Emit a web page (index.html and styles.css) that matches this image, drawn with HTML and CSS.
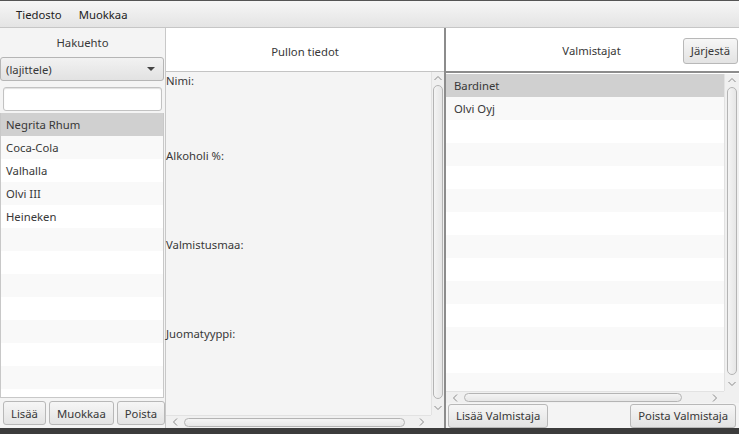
FILE: index.html
```html
<!DOCTYPE html>
<html lang="fi">
<head>
<meta charset="utf-8">
<title>Pullot</title>
<link rel="stylesheet" href="styles.css">
</head>
<body>
<div class="window">
  <div class="menubar">
    <span class="menu">Tiedosto</span>
    <span class="menu">Muokkaa</span>
  </div>
  <div class="main">
    <div class="left">
      <div class="left-title">Hakuehto</div>
      <div class="combo"><span>(lajittele)</span><span class="arrow"></span></div>
      <div class="textfield"></div>
      <div class="list">
        <div class="row sel">Negrita Rhum</div>
        <div class="row">Coca-Cola</div>
        <div class="row">Valhalla</div>
        <div class="row">Olvi III</div>
        <div class="row">Heineken</div>
        <div class="row"></div><div class="row"></div><div class="row"></div>
        <div class="row"></div><div class="row"></div><div class="row"></div>
        <div class="row"></div><div class="row"></div>
      </div>
      <div class="btnrow">
        <button class="btn">Lisää</button>
        <button class="btn">Muokkaa</button>
        <button class="btn">Poista</button>
      </div>
    </div>
    <div class="center">
      <div class="center-head">Pullon tiedot</div>
      <div class="spane">
        <div class="spane-top">
          <div class="details">
            <div class="field first">Nimi:</div>
            <div class="field">Alkoholi %:</div>
            <div class="field">Valmistusmaa:</div>
            <div class="field">Juomatyyppi:</div>
          </div>
          <div class="vbar">
            <svg class="chev" width="10" height="6" viewBox="0 0 10 6"><path d="M1.5 5 L5 1.5 L8.5 5" fill="none" stroke="#8a8a8a" stroke-width="1"/></svg>
            <div class="vthumb"></div>
            <svg class="chev" width="10" height="6" viewBox="0 0 10 6"><path d="M1.5 1 L5 4.5 L8.5 1" fill="none" stroke="#8a8a8a" stroke-width="1"/></svg>
          </div>
        </div>
        <div class="hbar-row">
          <div class="hbar">
            <svg class="chev" width="6" height="10" viewBox="0 0 6 10"><path d="M5 1.5 L1.5 5 L5 8.5" fill="none" stroke="#8a8a8a" stroke-width="1"/></svg>
            <div class="hthumb"></div>
            <svg class="chev" width="6" height="10" viewBox="0 0 6 10"><path d="M1 1.5 L4.5 5 L1 8.5" fill="none" stroke="#8a8a8a" stroke-width="1"/></svg>
          </div>
          <div class="corner"></div>
        </div>
      </div>
    </div>
    <div class="divider"></div>
    <div class="right">
      <div class="right-head">
        <span class="rtitle">Valmistajat</span>
        <button class="btn sort">Järjestä</button>
      </div>
      <div class="rlist">
        <div class="rlist-top">
          <div class="rrows">
            <div class="row sel">Bardinet</div>
            <div class="row">Olvi Oyj</div>
            <div class="row"></div><div class="row"></div><div class="row"></div>
            <div class="row"></div><div class="row"></div><div class="row"></div>
            <div class="row"></div><div class="row"></div><div class="row"></div>
            <div class="row"></div><div class="row"></div><div class="row"></div>
          </div>
          <div class="vbar rv">
            <svg class="chev" width="10" height="6" viewBox="0 0 10 6"><path d="M1.5 5 L5 1.5 L8.5 5" fill="none" stroke="#8a8a8a" stroke-width="1"/></svg>
            <div class="vthumb"></div>
            <svg class="chev" width="10" height="6" viewBox="0 0 10 6"><path d="M1.5 1 L5 4.5 L8.5 1" fill="none" stroke="#8a8a8a" stroke-width="1"/></svg>
          </div>
        </div>
        <div class="hbar-row">
          <div class="hbar">
            <svg class="chev" width="6" height="10" viewBox="0 0 6 10"><path d="M5 1.5 L1.5 5 L5 8.5" fill="none" stroke="#8a8a8a" stroke-width="1"/></svg>
            <div class="hthumb"></div>
            <svg class="chev" width="6" height="10" viewBox="0 0 6 10"><path d="M1 1.5 L4.5 5 L1 8.5" fill="none" stroke="#8a8a8a" stroke-width="1"/></svg>
          </div>
          <div class="corner"></div>
        </div>
      </div>
      <div class="rbtns">
        <button class="btn">Lisää Valmistaja</button>
        <button class="btn">Poista Valmistaja</button>
      </div>
    </div>
  </div>
  <div class="bottom"></div>
</div>
</body>
</html>
```
FILE: styles.css
```css
* { box-sizing: border-box; }
html, body { margin: 0; padding: 0; }
body {
  width: 739px;
  height: 434px;
  overflow: hidden;
  background: #3a3a3a;
  font-family: "Noto Sans", "Open Sans", sans-serif;
  font-size: 11.3px;
  color: #383838;
}
.window {
  width: 739px;
  height: 434px;
  display: flex;
  flex-direction: column;
}
.menubar {
  height: 28px;
  flex: none;
  border-top: 1px solid #555;
  background: linear-gradient(#f6f6f6, #e4e4e4);
  border-bottom: 1px solid #c6c6c6;
  display: flex;
  align-items: center;
  padding-left: 8px;
}
.menu { padding: 0 8px 0 8px; color: #222; }
.menu + .menu { padding-left: 9px; }
.main {
  height: 400px;
  flex: none;
  display: flex;
  background: #f4f4f4;
}
.bottom { flex: 1; background: #3c3c3c; }

/* left */
.left {
  width: 166px;
  flex: none;
  display: flex;
  flex-direction: column;
  border-right: 1px solid #c8c8c8;
  background: #f4f4f4;
}
.left-title {
  height: 29px;
  display: flex;
  align-items: center;
  justify-content: center;
  flex: none;
}
.combo {
  height: 24px;
  flex: none;
  width: 164px;
  border: 1px solid #b5b5b5;
  border-radius: 3px;
  background: linear-gradient(#f2f2f2, #e2e2e2);
  display: flex;
  align-items: center;
  justify-content: space-between;
  padding: 0 8px 0 5px;
}
.arrow {
  width: 0; height: 0;
  border-left: 4px solid transparent;
  border-right: 4px solid transparent;
  border-top: 4px solid #444;
}
.textfield {
  margin: 6px 3px 2px 3px;
  height: 24px;
  flex: none;
  background: #fff;
  border: 1px solid #c2c2c2;
  border-radius: 3px;
  box-shadow: inset 0 1px 1px #e0e0e0;
}
.list {
  flex: 1;
  width: 164px;
  overflow: hidden;
  background: #fff;
  border: 1px solid #c8c8c8;
  border-top: none;
}
.row {
  height: 23px;
  line-height: 23px;
  padding-left: 5px;
  white-space: nowrap;
}
.row:nth-child(even) { background: #f9f9f9; }
.row.sel { background: #d0d0d0; }
.btnrow {
  height: 30px;
  flex: none;
  display: flex;
  gap: 3px;
  align-items: center;
  padding: 0 3px;
}
.btn {
  font-family: inherit;
  font-size: 11.3px;
  color: #383838;
  height: 24px;
  padding: 0 7px;
  border: 1px solid #b8b8b8;
  border-radius: 3px;
  background: linear-gradient(#f6f6f6, #e3e3e3);
  margin: 0;
}
.btnrow .btn { flex: none; }

/* center */
.center {
  width: 278px;
  flex: none;
  display: flex;
  flex-direction: column;
}
.center-head {
  height: 44px;
  flex: none;
  background: #fff;
  border-bottom: 1px solid #c4c4c4;
  display: flex;
  align-items: center;
  justify-content: center;
  padding-top: 4px;
}
.spane {
  flex: 1;
  display: flex;
  flex-direction: column;
  background: #f4f4f4;
}
.spane-top { flex: 1; display: flex; min-height: 0; }
.details { flex: 1; padding-top: 1px; }
.field { height: 89px; line-height: 16px; }
.field.first { height: 75px; }
.vbar {
  width: 13px;
  flex: none;
  display: flex;
  flex-direction: column;
  align-items: center;
  background: #f0f0f0;
  border-left: 1px solid #e2e2e2;
  padding: 3px 0 4px;
}
.vthumb {
  flex: 1;
  width: 10px;
  margin: 4px 0 6px;
  border: 1px solid #b4b4b4;
  border-radius: 5px;
  background: linear-gradient(90deg, #f4f4f4, #e6e6e6);
}
.chev { flex: none; display: block; }
.hbar-row { height: 13px; flex: none; display: flex; }
.hbar {
  flex: 1;
  display: flex;
  align-items: center;
  background: #f0f0f0;
  border-top: 1px solid #e2e2e2;
  padding: 0 6px;
}
.hthumb {
  flex: 1;
  height: 9px;
  margin: 0 14px 0 6px;
  border: 1px solid #b4b4b4;
  border-radius: 5px;
  background: linear-gradient(#f4f4f4, #e6e6e6);
}
.corner { width: 13px; flex: none; background: #f0f0f0; }

.divider { width: 2px; flex: none; background: #8c8c8c; }

/* right */
.right {
  flex: 1;
  display: flex;
  flex-direction: column;
  background: #f4f4f4;
}
.right-head {
  height: 45px;
  flex: none;
  background: #fff;
  border-bottom: 2px solid #8c8c8c;
  display: flex;
  align-items: center;
  justify-content: flex-end;
  padding-right: 1px;
  padding-top: 2px;
  gap: 62px;
}
.sort { height: 26px; padding: 0 7px; }
.rlist {
  height: 330px;
  flex: none;
  display: flex;
  flex-direction: column;
  background: #fff;
  padding-top: 1px;
}
.rlist-top { flex: 1; display: flex; min-height: 0; }
.rrows { flex: 1; overflow: hidden; background: #fff; }
.rrows .row { padding-left: 8px; }
.rv { width: 15px; }
.rlist .hbar-row { height: 12px; }
.rlist .hthumb { margin: 0 30px 0 6px; }
.rlist .corner { width: 15px; }
.rbtns {
  flex: 1;
  display: flex;
  justify-content: space-between;
  align-items: center;
  padding: 0 3px 0 2px;
}
```
